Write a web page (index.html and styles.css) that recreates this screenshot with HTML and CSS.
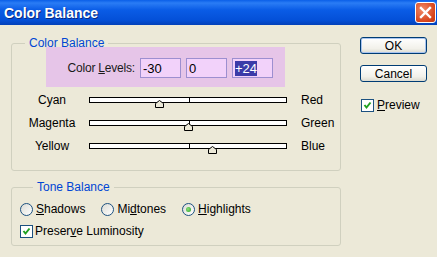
FILE: index.html
```html
<!DOCTYPE html>
<html lang="en">
<head>
    <meta charset="UTF-8">
    <title>Color Balance</title>
    <link rel="stylesheet" href="styles.css">
</head>
<body>

    <div class="window">
        <!-- Barra de título -->
        <div class="titlebar">
            <span class="title">Color Balance</span>
            <button class="close-btn" aria-label="Close">
                <svg width="13" height="13" viewBox="0 0 13 13">
                    <path d="M2 2 L11 11 M11 2 L2 11" stroke="#fff" stroke-width="2.4" stroke-linecap="square"/>
                </svg>
            </button>
        </div>

        <div class="content">
            <div class="main">
                <fieldset class="group first">
                    <legend>Color Balance</legend>
                    <div class="levels">
                        <span class="levels-label">Color <u>L</u>evels:</span>
                        <input type="text" value="-30">
                        <input type="text" value="0">
                        <div class="fake-input"><span class="selected">+24</span></div>
                    </div>

                    <div class="slider-row">
                        <span class="left-label">Cyan</span>
                        <div class="track">
                            <span class="tick"></span>
                            <svg class="thumb" style="left: 35%;" width="11" height="8" viewBox="0 0 11 8">
                                <path d="M1.5 7.5 V3.5 L5.5 0.5 L9.5 3.5 V7.5 Z" fill="#ece9d8" stroke="#000"/>
                            </svg>
                        </div>
                        <span class="right-label">Red</span>
                    </div>

                    <div class="slider-row">
                        <span class="left-label">Magenta</span>
                        <div class="track">
                            <span class="tick"></span>
                            <svg class="thumb" style="left: 50%;" width="11" height="8" viewBox="0 0 11 8">
                                <path d="M1.5 7.5 V3.5 L5.5 0.5 L9.5 3.5 V7.5 Z" fill="#ece9d8" stroke="#000"/>
                            </svg>
                        </div>
                        <span class="right-label">Green</span>
                    </div>

                    <div class="slider-row">
                        <span class="left-label">Yellow</span>
                        <div class="track">
                            <span class="tick"></span>
                            <svg class="thumb" style="left: 62%;" width="11" height="8" viewBox="0 0 11 8">
                                <path d="M1.5 7.5 V3.5 L5.5 0.5 L9.5 3.5 V7.5 Z" fill="#ece9d8" stroke="#000"/>
                            </svg>
                        </div>
                        <span class="right-label">Blue</span>
                    </div>
                </fieldset>

                <fieldset class="group tone">
                    <legend>Tone Balance</legend>
                    <div class="radios">
                        <label class="radio"><span class="radio-dot"></span><span><u>S</u>hadows</span></label>
                        <label class="radio"><span class="radio-dot"></span><span>Mi<u>d</u>tones</span></label>
                        <label class="radio"><span class="radio-dot checked"></span><span><u>H</u>ighlights</span></label>
                    </div>
                    <label class="check">
                        <span class="check-box">
                            <svg width="11" height="11" viewBox="0 0 11 11"><path d="M2.5 5 L4.5 7.5 L8.5 2.5" fill="none" stroke="#21a121" stroke-width="2"/></svg>
                        </span>
                        <span>Preser<u>v</u>e Luminosity</span>
                    </label>
                </fieldset>
            </div>

            <div class="side">
                <button class="btn default">OK</button>
                <button class="btn">Cancel</button>
                <label class="check preview">
                    <span class="check-box">
                        <svg width="11" height="11" viewBox="0 0 11 11"><path d="M2.5 5 L4.5 7.5 L8.5 2.5" fill="none" stroke="#21a121" stroke-width="2"/></svg>
                    </span>
                    <span><u>P</u>review</span>
                </label>
            </div>
        </div>
    </div>

</body>
</html>
```

FILE: styles.css
```css
body {
    margin: 0;
    font-family: "Liberation Sans", Arial, sans-serif;
    font-size: 12px;
    color: #000;
    background-color: #ece9d8;
}
.window {
    width: 437px;
    height: 257px;
    background-color: #ece9d8;
}
.titlebar {
    height: 25px;
    display: flex;
    align-items: center;
    justify-content: space-between;
    padding: 0 1px 0 4px;
    box-sizing: border-box;
    background: linear-gradient(#0a5fe8 0%, #2a7cf5 12%, #0a5ce6 40%, #0450d8 80%, #0341b8 100%);
}
.title {
    color: #fff;
    font-weight: bold;
    font-size: 14px;
    text-shadow: 1px 1px 0 #0a2a80;
}
.close-btn {
    width: 21px;
    height: 21px;
    padding: 0;
    display: flex;
    align-items: center;
    justify-content: center;
    border: 1px solid #fff;
    border-radius: 3px;
    background: radial-gradient(circle at 35% 35%, #f08a68, #d8441c 70%, #c23a14);
}
.content {
    display: flex;
    padding: 12px 0 0 11px;
}
.main {
    width: 330px;
}
.group {
    margin: 0;
    padding: 0;
    border: 1px solid #d0d0bf;
    border-radius: 3px;
}
.group legend {
    margin-left: 13px;
    padding: 0 4px;
    line-height: 13px;
    color: #0046d5;
    font-size: 12px;
}
.first {
    padding-bottom: 13px;
}
.levels {
    display: flex;
    align-items: center;
    gap: 5px;
    width: 239px;
    height: 40px;
    box-sizing: border-box;
    margin: -3px 0 0 34px;
    padding: 2px 0 0 0;
    background-color: #e6c5e8;
}
.levels-label {
    width: 89px;
    text-align: right;
    color: #1a1a1a;
    letter-spacing: -0.2px;
}
.levels input,
.fake-input {
    width: 41px;
    height: 20px;
    box-sizing: border-box;
    margin: 0;
    padding: 0 2px;
    border: 1px solid #9d8fd0;
    background-color: #f2d2fa;
    font-family: inherit;
    font-size: 13px;
    color: #000;
    outline: none;
}
.fake-input {
    display: flex;
    align-items: center;
}
.selected {
    background-color: #3b3ba8;
    color: #fff;
    line-height: 15px;
}
.slider-row {
    display: flex;
    align-items: center;
    height: 23px;
}
.levels + .slider-row {
    margin-top: 1px;
}
.left-label {
    width: 74px;
    margin-left: 3px;
    text-align: center;
}
.track {
    position: relative;
    width: 198px;
    height: 6px;
    border: 1px solid #000;
    box-sizing: border-box;
    background-color: #fff;
}
.tick {
    position: absolute;
    left: 99px;
    top: 0;
    width: 1px;
    height: 4px;
    background-color: #000;
}
.thumb {
    position: absolute;
    top: 2px;
    margin-left: -5px;
}
.right-label {
    margin-left: 14px;
}
.tone {
    margin-top: 10px;
    padding: 6px 0 7px 8px;
}
.radios {
    display: flex;
    align-items: center;
    height: 18px;
}
.radio {
    display: flex;
    align-items: center;
    gap: 3px;
}
.radio + .radio {
    margin-left: 16px;
}
.radio-dot {
    width: 11px;
    height: 11px;
    border: 1px solid #1c5180;
    border-radius: 50%;
    background: linear-gradient(135deg, #dcdcd4, #fff);
    position: relative;
}
.radio-dot.checked::after {
    content: "";
    position: absolute;
    left: 3px;
    top: 3px;
    width: 5px;
    height: 5px;
    border-radius: 50%;
    background: radial-gradient(circle at 40% 40%, #8de07a, #21a121);
}
.check {
    display: flex;
    align-items: center;
    gap: 2px;
    margin-top: 6px;
}
.check-box {
    display: flex;
    width: 11px;
    height: 11px;
    border: 1px solid #1c5180;
    background-color: #fff;
}
.side {
    display: flex;
    flex-direction: column;
    align-items: flex-start;
    padding: 0 0 0 19px;
}
.btn {
    width: 67px;
    height: 17px;
    padding: 0;
    border: 1px solid #003c74;
    border-radius: 3px;
    background: linear-gradient(#fff, #f2f1ea 70%, #dcdbd0);
    font-family: inherit;
    font-size: 12px;
    line-height: 14px;
    color: #000;
}
.btn.default {
    box-shadow: inset 0 0 0 1px #a8c4f0;
}
.btn + .btn {
    margin-top: 11px;
}
.preview {
    margin-top: 16px;
    margin-left: 1px;
    gap: 3px;
}
```
